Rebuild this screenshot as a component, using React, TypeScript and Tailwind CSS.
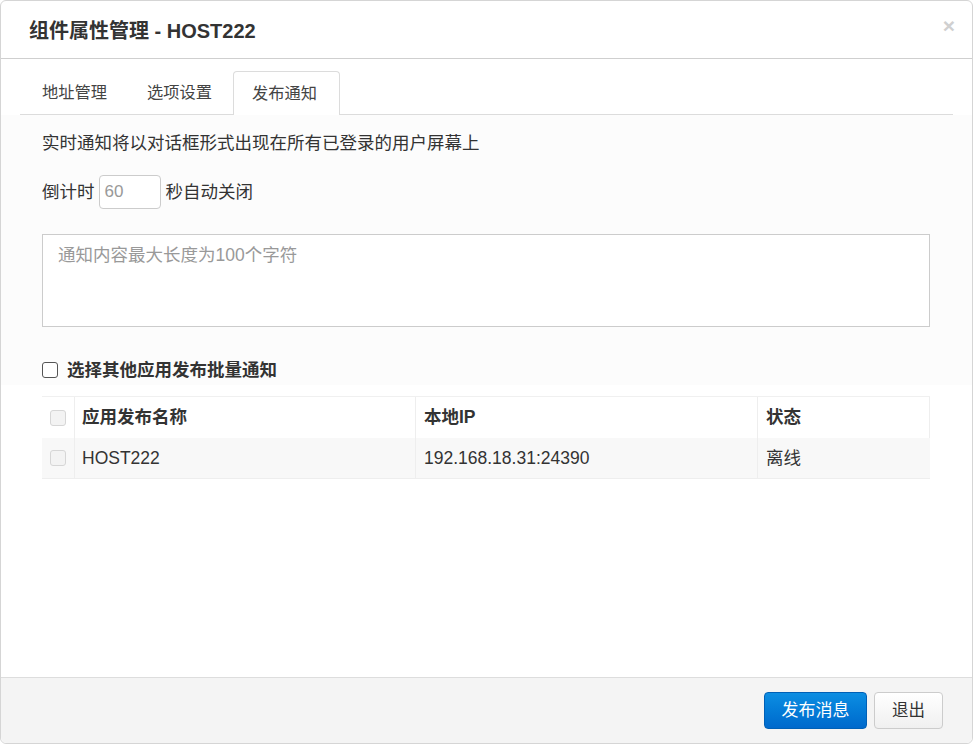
import React from "react";

const tabs = [
  { label: "地址管理", cls: "pl-[22px] pr-[20px]" },
  { label: "选项设置", cls: "pl-[20px] pr-[21px]" },
];

const rows = [{ name: "HOST222", ip: "192.168.18.31:24390", status: "离线" }];

function Box({ light }: { light?: boolean }) {
  return (
    <span
      className={`inline-block w-[16px] h-[16px] rounded-[3px] border ${
        light ? "border-[#d6d6d6] bg-[#f3f3f3]" : "border-[#555] bg-white"
      }`}
    />
  );
}

export default function App() {
  return (
    <div
      className="w-[973px] h-[744px] bg-white text-[#333] overflow-hidden"
      style={{ fontFamily: '"Liberation Sans", "Noto Sans CJK SC", sans-serif' }}
    >
      <div className="h-full flex flex-col rounded-[6px] border border-[#d5d5d5]">
        {/* Header */}
        <div className="h-[58px] shrink-0 flex items-center justify-between pl-[28px] pr-[17px] border-b border-[#cfcfcf]">
          <h2 className="text-[20px] font-bold text-[#333] mt-[2px]">组件属性管理 - HOST222</h2>
          <span className="text-[21px] leading-none font-bold text-[#d0d0d0] -mt-[8px]">×</span>
        </div>

        {/* Tabs */}
        <div className="pt-[12px] pl-[19px] pr-[19px]">
          <div className="flex items-end border-b border-[#dcdcdc] h-[44px] text-[16.25px] text-[#444]">
            {tabs.map((t) => (
              <div key={t.label} className={`h-[44px] flex items-center ${t.cls}`}>
                {t.label}
              </div>
            ))}
            <div className="h-[44px] flex items-center pl-[18px] pr-[22px] border border-b-0 border-[#dcdcdc] rounded-t-[4px] bg-white -mb-px">
              发布通知
            </div>
          </div>
        </div>

        {/* Tab content */}
        <div className="bg-[#fcfcfc] pl-[41px] pr-[42px] pb-[4px] text-[17.5px]">
          <p className="pt-[17px] leading-[22px]">实时通知将以对话框形式出现在所有已登录的用户屏幕上</p>
          <div className="flex items-center mt-[21px] h-[34px]">
            <span>倒计时</span>
            <div className="ml-[4px] w-[62px] h-[34px] rounded-[4px] border border-[#ccc] bg-white flex items-center px-[5px] text-[17px] text-[#999]">
              60
            </div>
            <span className="ml-[5px]">秒自动关闭</span>
          </div>
          <div className="mt-[25px] h-[93px] border border-[#ccc] bg-white px-[15px] pt-[8px] leading-[25px] text-[#999]">
            通知内容最大长度为100个字符
          </div>
          <label className="flex items-center gap-[9px] mt-[32px] h-[22px] font-bold text-[#333]">
            <Box />
            选择其他应用发布批量通知
          </label>
        </div>

        {/* Table */}
        <div className="pl-[41px] pr-[42px] mt-[11px]">
          <div className="grid grid-cols-[33px_341px_342px_1fr] text-[17.5px] border-t border-[#f0f0f0]">
            <div className="h-[41px] flex items-center justify-center border-r border-[#eee] bg-white">
              <Box light />
            </div>
            <div className="h-[41px] flex items-center px-[7px] font-bold border-r border-[#eee]">应用发布名称</div>
            <div className="h-[41px] flex items-center px-[8px] font-bold border-r border-[#eee]">本地IP</div>
            <div className="h-[41px] flex items-center px-[8px] font-bold border-r border-[#eee]">状态</div>
            {rows.map((r) => (
              <React.Fragment key={r.name}>
                <div className="h-[41px] flex items-center justify-center bg-[#f8f8f8] border-r border-[#eee] border-b">
                  <Box light />
                </div>
                <div className="h-[41px] flex items-center px-[7px] bg-[#f8f8f8] border-r border-[#eee] border-b">{r.name}</div>
                <div className="h-[41px] flex items-center px-[8px] bg-[#f8f8f8] border-r border-[#eee] border-b">{r.ip}</div>
                <div className="h-[41px] flex items-center px-[8px] bg-[#f8f8f8] border-[#eee] border-b">{r.status}</div>
              </React.Fragment>
            ))}
          </div>
        </div>

        <div className="flex-1" />

        {/* Footer */}
        <div className="h-[66px] shrink-0 bg-[#f4f4f4] border-t border-[#ddd] rounded-b-[6px] flex items-center justify-end gap-[7px] pr-[29px]">
          <button className="h-[37px] w-[103px] rounded-[4px] border border-[#0060b6] bg-gradient-to-b from-[#0d8ee2] to-[#0069cc] text-white text-[17px]">
            发布消息
          </button>
          <button className="h-[37px] w-[69px] rounded-[4px] border border-[#ccc] bg-gradient-to-b from-white to-[#f0f0f0] text-[#333] text-[16.5px]">
            退出
          </button>
        </div>
      </div>
    </div>
  );
}
